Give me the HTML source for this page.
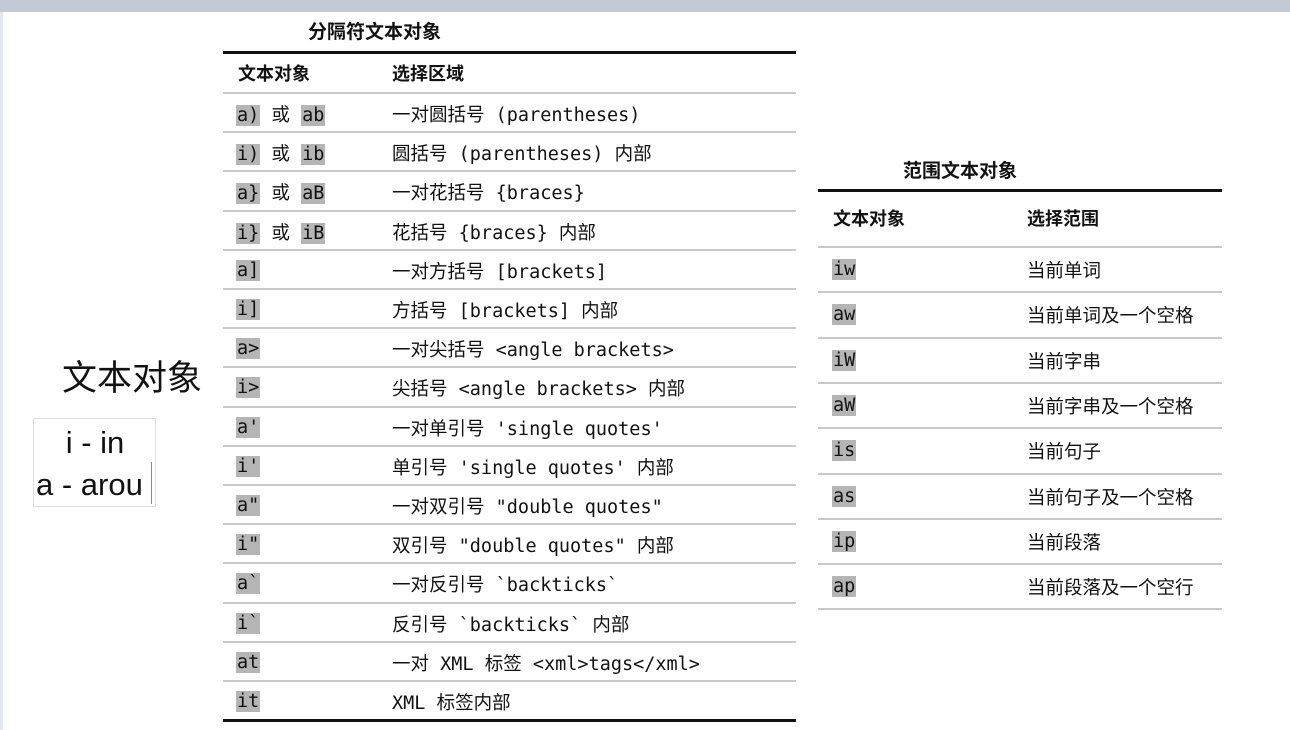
<!DOCTYPE html>
<html><head><meta charset="utf-8"><style>
body{margin:0;width:1290px;height:730px;background:#fff;position:relative;overflow:hidden;font-family:"DejaVu Sans Mono","Noto Sans CJK SC",monospace;color:#111}
.top{position:absolute;left:0;top:0;width:1290px;height:12px;background:#c4c9d5}
.ledge{position:absolute;left:0;top:12px;width:3px;height:718px;background:#e4e7ee}
.t{position:absolute;white-space:nowrap}
.cjk{font-family:"Noto Sans CJK SC",sans-serif}
.z{font-family:"Noto Sans CJK SC",sans-serif;font-size:18.5px}
.b{font-weight:bold}
.c{background:#b5b5b5;padding:0 1px}
.line{position:absolute;height:2px;background:#c9c9c9}
.thick{position:absolute;height:3px;background:#111}
.row{position:absolute;font-size:18.5px;line-height:24px;white-space:nowrap}
</style></head><body>
<div class="top"></div><div class="ledge"></div>

<div class="t cjk" style="left:62px;top:353px;font-size:35px;line-height:46px">文本对象</div>
<div style="position:absolute;left:33px;top:418px;width:121px;height:87px;border:1px solid #ddd"></div>
<div class="t" style="left:33px;top:423px;width:124px;text-align:center;font-family:'Liberation Sans',sans-serif;font-size:31px;line-height:40px">i - in</div>
<div class="t" style="left:36px;top:465px;font-family:'Liberation Sans',sans-serif;font-size:31px;line-height:40px">a - arou</div>
<div style="position:absolute;left:151px;top:462px;width:1px;height:42px;background:#888"></div>

<div class="t cjk b" style="left:308px;top:17px;font-size:19px;line-height:28px">分隔符文本对象</div>
<div class="thick" style="left:223px;top:51px;width:573px"></div>
<div class="t cjk b" style="left:238px;top:61px;font-size:18px;line-height:24px">文本对象</div>
<div class="t cjk b" style="left:392px;top:61px;font-size:18px;line-height:24px">选择区域</div>
<div id="L"></div>
<div class="thick" style="left:223px;top:719px;width:573px"></div>

<div class="t cjk b" style="left:903px;top:156px;font-size:19px;line-height:28px">范围文本对象</div>
<div class="thick" style="left:818px;top:189px;width:404px"></div>
<div class="t cjk b" style="left:833px;top:206px;font-size:18px;line-height:24px">文本对象</div>
<div class="t cjk b" style="left:1027px;top:206px;font-size:18px;line-height:24px">选择范围</div>
<div id="R"></div>

<script>
(function(){
function z(s){return '<span class=z>'+s+'</span>';}
var L=[["<span class=c>a)</span> "+z("或")+" <span class=c>ab</span>",z("一对圆括号")+" (parentheses)"],
["<span class=c>i)</span> "+z("或")+" <span class=c>ib</span>",z("圆括号")+" (parentheses) "+z("内部")],
["<span class=c>a}</span> "+z("或")+" <span class=c>aB</span>",z("一对花括号")+" {braces}"],
["<span class=c>i}</span> "+z("或")+" <span class=c>iB</span>",z("花括号")+" {braces} "+z("内部")],
["<span class=c>a]</span>",z("一对方括号")+" [brackets]"],
["<span class=c>i]</span>",z("方括号")+" [brackets] "+z("内部")],
["<span class=c>a&gt;</span>",z("一对尖括号")+" &lt;angle brackets&gt;"],
["<span class=c>i&gt;</span>",z("尖括号")+" &lt;angle brackets&gt; "+z("内部")],
["<span class=c>a'</span>",z("一对单引号")+" 'single quotes'"],
["<span class=c>i'</span>",z("单引号")+" 'single quotes' "+z("内部")],
["<span class=c>a\"</span>",z("一对双引号")+" \"double quotes\""],
["<span class=c>i\"</span>",z("双引号")+" \"double quotes\" "+z("内部")],
["<span class=c>a`</span>",z("一对反引号")+" `backticks`"],
["<span class=c>i`</span>",z("反引号")+" `backticks` "+z("内部")],
["<span class=c>at</span>",z("一对")+" XML "+z("标签")+" &lt;xml&gt;tags&lt;/xml&gt;"],
["<span class=c>it</span>","XML "+z("标签内部")]];
var h="";
for(var i=0;i<L.length;i++){var y=Math.round(93+39.2*i);
 h+='<div class="line" style="left:223px;top:'+(y-1)+'px;width:573px"></div>';
 h+='<div class="row" style="left:236px;top:'+(y+9)+'px">'+L[i][0]+'</div>';
 h+='<div class="row" style="left:392px;top:'+(y+9)+'px">'+L[i][1]+'</div>';}
document.getElementById("L").innerHTML=h;
var R=[["iw","当前单词"],["aw","当前单词及一个空格"],["iW","当前字串"],["aW","当前字串及一个空格"],["is","当前句子"],["as","当前句子及一个空格"],["ip","当前段落"],["ap","当前段落及一个空行"]];
h="";
for(var i=0;i<=R.length;i++){var y=Math.round(247+45.3*i);
 h+='<div class="line" style="left:818px;top:'+(y-1)+'px;width:404px"></div>';
 if(i<R.length){
 h+='<div class="row" style="left:832px;top:'+(y+11)+'px"><span class=c>'+R[i][0]+'</span></div>';
 h+='<div class="row cjk" style="left:1027px;top:'+(y+11)+'px;font-size:18.5px">'+R[i][1]+'</div>';}}
document.getElementById("R").innerHTML=h;
})();
</script>
</body></html>
